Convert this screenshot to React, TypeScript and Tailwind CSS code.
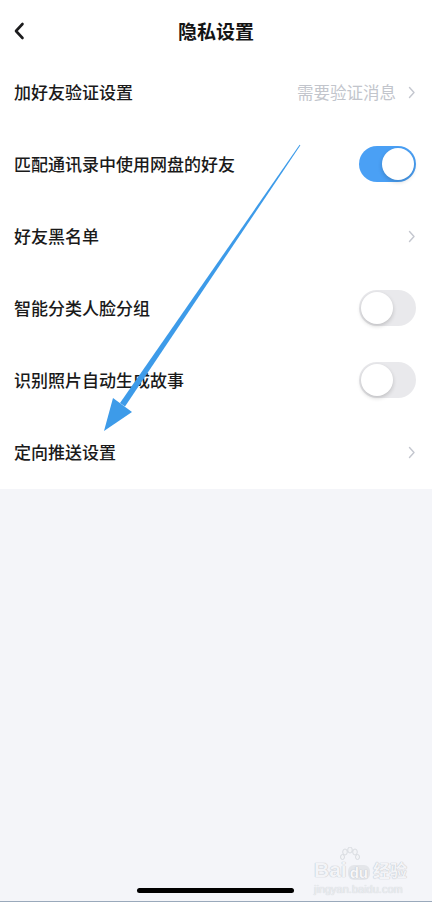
import React from "react";

const font = { fontFamily: '"PingFang SC", "Noto Sans CJK SC", "Noto Sans", sans-serif' };

function Chevron() {
  return (
    <svg width="8" height="13" viewBox="0 0 8 13" fill="none">
      <path d="M1.5 1.5 L6 6.5 L1.5 11.5" stroke="#c4c7cf" strokeWidth="1.4" strokeLinecap="round" strokeLinejoin="round" />
    </svg>
  );
}

function Toggle({ on }: { on: boolean }) {
  return (
    <div className={`relative flex h-[36px] w-[57px] items-center rounded-full p-[2px] ${on ? "justify-end bg-[#4aa0f5]" : "justify-start bg-[#e9e9ec]"}`}>
      <div className="h-[32px] w-[32px] rounded-full bg-white shadow-[0_2px_4px_rgba(0,0,0,0.18)]" />
    </div>
  );
}

const rows: { label: string; kind: "link" | "on" | "off"; value?: string }[] = [
  { label: "加好友验证设置", kind: "link", value: "需要验证消息" },
  { label: "匹配通讯录中使用网盘的好友", kind: "on" },
  { label: "好友黑名单", kind: "link" },
  { label: "智能分类人脸分组", kind: "off" },
  { label: "识别照片自动生成故事", kind: "off" },
  { label: "定向推送设置", kind: "link" },
];

export default function App() {
  return (
    <div className="relative flex h-[902px] w-[432px] flex-col overflow-hidden bg-[#f4f5f9]" style={font}>
      <div className="bg-white">
        <div className="relative flex h-[56px] items-center justify-center pt-[6px]">
          <svg className="absolute left-[13px] top-[22px]" width="12" height="18" viewBox="0 0 12 18" fill="none">
            <path d="M9.5 2 L3 9 L9.5 16" stroke="#1c1c1e" strokeWidth="2.6" strokeLinecap="round" strokeLinejoin="round" />
          </svg>
          <span className="text-[19px] font-bold text-[#141414]">隐私设置</span>
        </div>
        {rows.map((r) => (
          <div key={r.label} className="flex h-[72px] items-center justify-between pl-[14px] pr-[16px]">
            <span className="text-[17px] font-medium text-[#1a1a1a]">{r.label}</span>
            {r.kind === "link" ? (
              <div className="flex items-center gap-[12px]">
                {r.value && <span className="text-[16.5px] text-[#c2c5cc]">{r.value}</span>}
                <Chevron />
              </div>
            ) : (
              <Toggle on={r.kind === "on"} />
            )}
          </div>
        ))}
        <div className="h-[1px]" />
      </div>

      {/* annotation arrow */}
      <svg className="pointer-events-none absolute left-0 top-0" width="432" height="902" viewBox="0 0 432 902">
        <polygon points="300.4,145.3 299.6,144.7 120,403 125,406.5" fill="#3d9be9" />
        <polygon points="104,431 113,398 132,412" fill="#3d9be9" />
      </svg>

      {/* watermark */}
      <div className="pointer-events-none absolute left-[314px] top-[847px] flex flex-col items-start" style={{ fontFamily: '"Liberation Sans", "Noto Sans CJK SC", sans-serif' }}>
        <svg className="absolute left-[26px] top-0" width="20" height="15" viewBox="0 0 20 15">
          <g fill="#f3f4f7" stroke="#d2d5db" strokeWidth="0.8">
            <ellipse cx="5" cy="5" rx="2.3" ry="3" />
            <ellipse cx="10" cy="3" rx="2.3" ry="3" />
            <ellipse cx="15" cy="5" rx="2.3" ry="3" />
            <ellipse cx="2.5" cy="10" rx="2" ry="2.5" />
            <ellipse cx="17.5" cy="10" rx="2" ry="2.5" />
          </g>
        </svg>
        <div className="mt-[12px] flex items-end text-[21px] font-bold leading-none text-[#f3f4f7] [text-shadow:0_0_1px_#bfc3ca,0_0_1px_#bfc3ca]">
          <span>Bai</span>
          <span className="mx-[1px] rounded-[6px] bg-[#e4e6ea] px-[2px] text-[15px] text-[#f7f7f9]">du</span>
          <span className="ml-[2px] text-[17px]">经验</span>
        </div>
        <span className="mt-[4px] text-[11px] leading-none text-[#eceef1] [text-shadow:0_0_1px_#c0c4cb]">jingyan.baidu.com</span>
      </div>

      {/* home indicator */}
      <div className="absolute left-[137px] top-[888px] h-[5px] w-[157px] rounded-full bg-black" />
      <div className="absolute bottom-0 left-0 h-[1px] w-full bg-[#9aa9bb]" />
    </div>
  );
}
